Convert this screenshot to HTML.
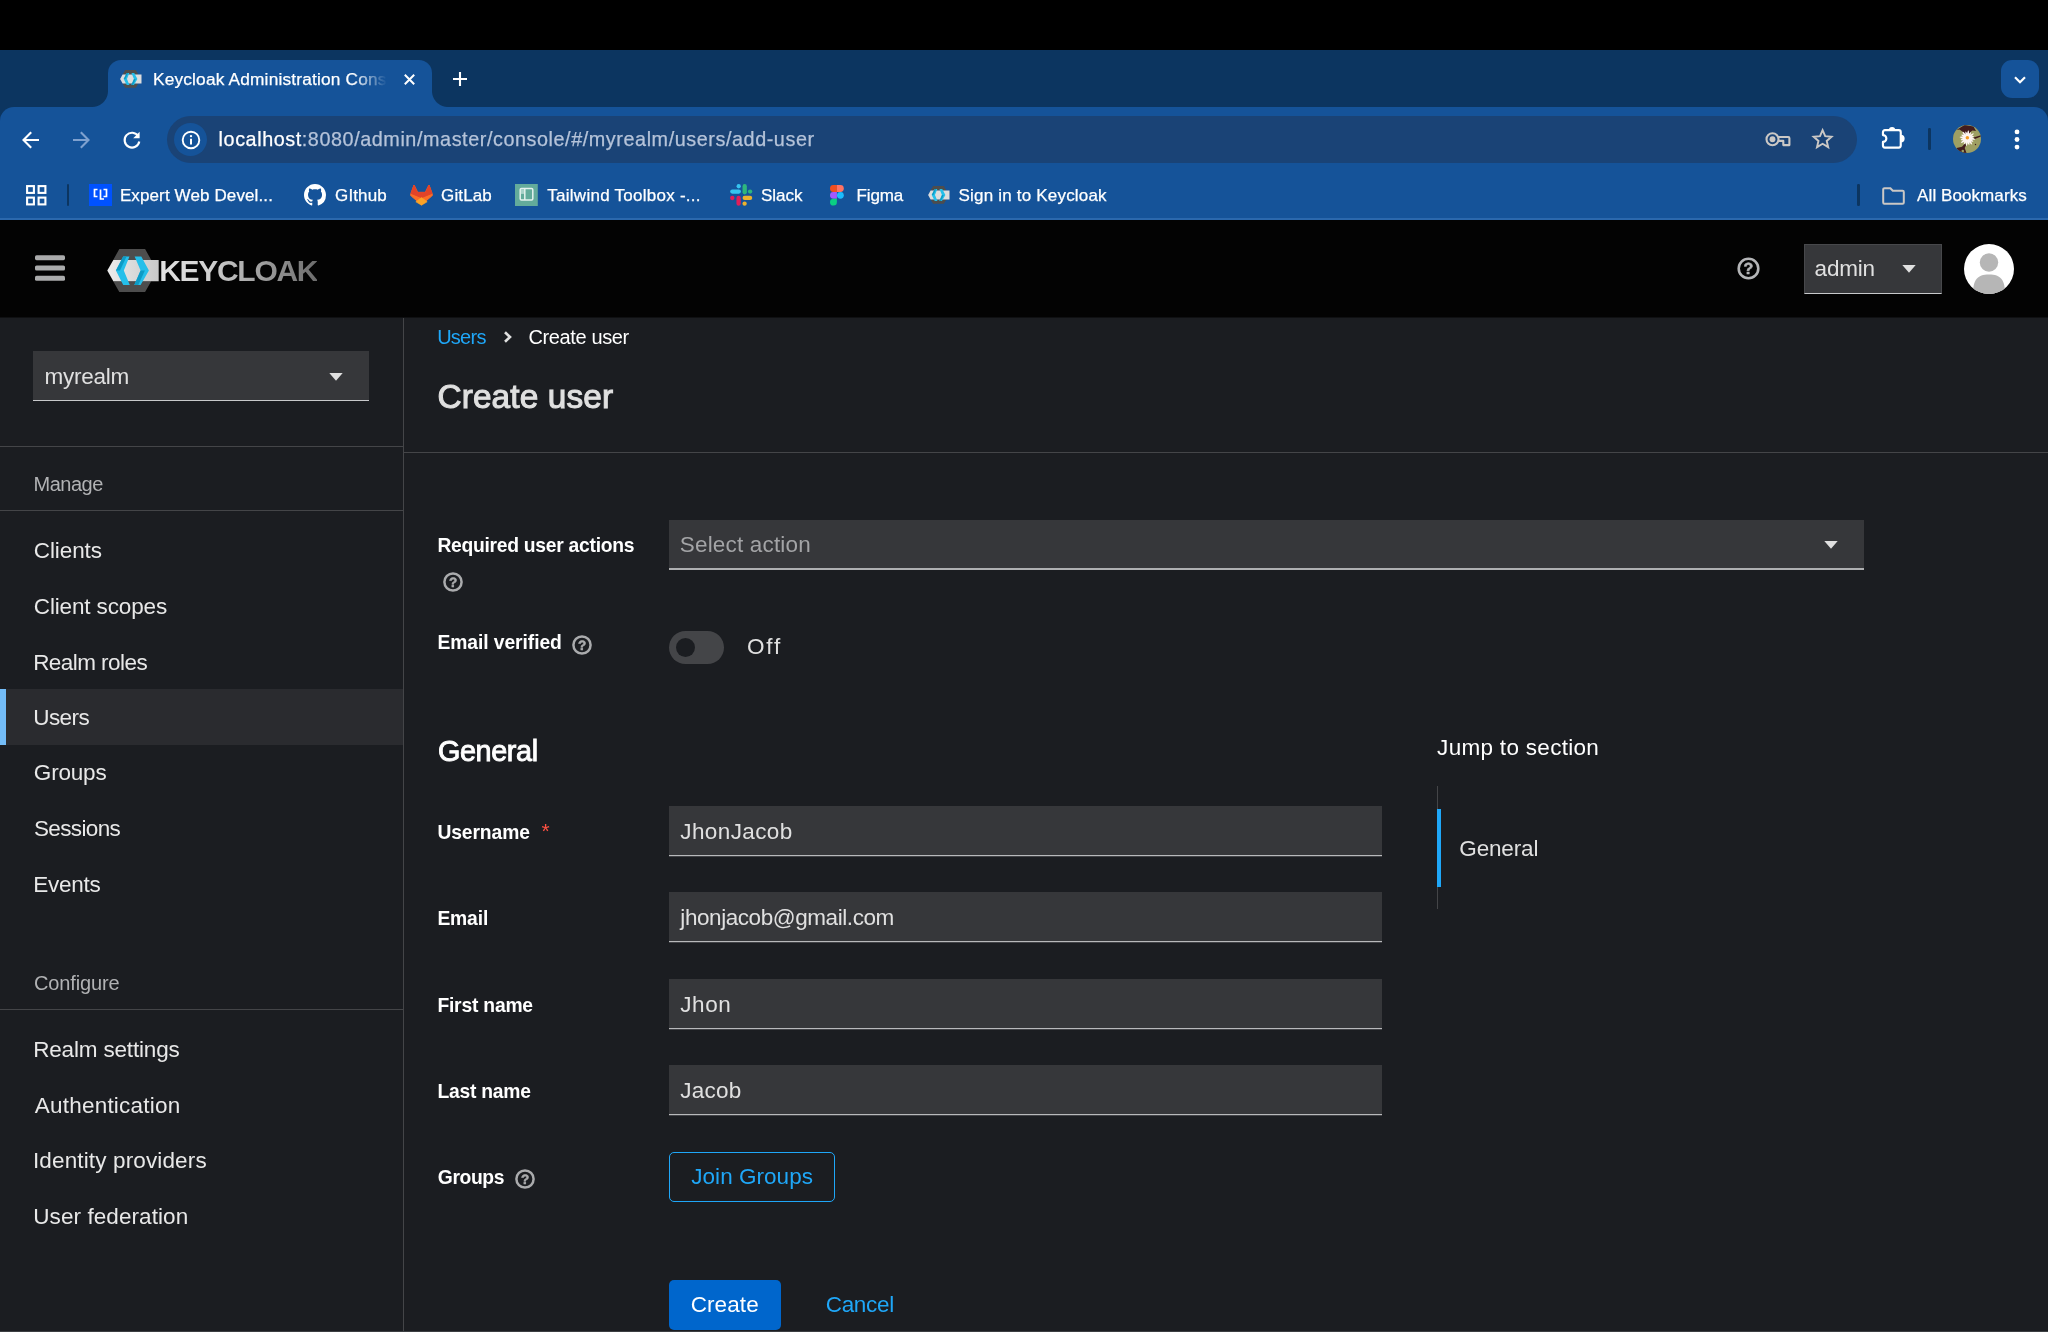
<!DOCTYPE html>
<html lang="en">
<head>
<meta charset="utf-8">
<title>Keycloak Administration Console</title>
<style>
*{box-sizing:border-box;margin:0;padding:0}
html,body{width:2048px;height:1332px;overflow:hidden;background:#000}
body{position:relative;font-family:"Liberation Sans",sans-serif;color:#fff}
.a{position:absolute}
.t{position:absolute;white-space:nowrap;line-height:1;color:#fff}
svg{position:absolute;overflow:visible}
svg text{text-rendering:geometricPrecision}
svg.hq{will-change:transform}
#tw{position:absolute;left:0;top:0;width:2048px;height:1332px;will-change:transform}
/* chrome */
#strip{left:0;top:50px;width:2048px;height:90px;background:#0c3560}
#tab{left:108px;top:60px;width:324px;height:47px;background:#155399;border-radius:13px 13px 0 0}
#tabl{left:92px;top:91px;width:16px;height:16px;background:radial-gradient(circle at 0 0,transparent 15.5px,#155399 16.5px)}
#tabr{left:432px;top:91px;width:16px;height:16px;background:radial-gradient(circle at 100% 0,transparent 15.5px,#155399 16.5px)}
#tool{left:0;top:107px;width:2048px;height:112px;background:#155399;border-radius:14px 14px 0 0}
#toolline{left:0;top:218px;width:2048px;height:2px;background:#2b68ad}
#omni{left:167px;top:116px;width:1690px;height:47px;border-radius:24px;background:#1a4376}
#info{left:174px;top:123px;width:33px;height:33px;border-radius:50%;background:#155399}
#tabsbtn{left:2001px;top:60px;width:38px;height:38px;border-radius:11px;background:#155399}
.cf{font-size:17px;color:#fff}
/* keycloak */
#hdr{left:0;top:220px;width:2048px;height:98px;background:linear-gradient(#030303 97px,#0f1012 97px)}
#page{left:0;top:318px;width:2048px;height:1014px;background:#1b1d21}
.ln{position:absolute;background:#444548}
.nav{font-size:22.5px;color:#f0f0f0;left:33px}
.lbl{font-size:18.5px;font-weight:bold;color:#fff;left:437px}
.inp{position:absolute;left:669px;width:713px;height:50px;background:#36373a;border-bottom:1px solid #b8b9bb;box-shadow:0 1px 0 rgba(184,185,187,.25)}
.val{font-size:22.5px;color:#e0e0e0;left:680px}
</style>
</head>
<body>
<!-- ===== browser chrome ===== -->
<div class="a" id="strip"></div>
<div class="a" id="tab"></div><div class="a" id="tabl"></div><div class="a" id="tabr"></div>
<div class="a" id="tabsbtn"></div>
<div class="a" id="tool"></div>
<div class="a" id="toolline"></div>
<div class="a" id="omni"></div>
<div class="a" id="info"></div>
<!-- chrome icons -->
<!-- tab favicon (keycloak) -->
<svg style="left:120.200px;top:70.200px" width="21.600" height="17.900" viewBox="0 0 52 43">
<path d="M12.300 0h25.800l6.100 11h-38zM6.200 32.300h38l-6.100 10.700h-25.800z" fill="#4d4d4d"/>
<path d="M0.300 21.600l6-10.600h45.400v21.300h-45.400z" fill="#dddddd"/>
<path d="M16.200 7.400h6.300l-5.700 14.200 6 14.400h-6.600l-7.300-14.400z" fill="#25bfea"/>
<path d="M16.200 7.400h3.400l-6.600 14.200h-4.100z" fill="#0e9bc5"/>
<path d="M34.300 7.400h-6.700l6 14.200-6.300 14.400h6.300l8.300-14.400z" fill="#25bfea"/>
<path d="M33.600 21.600h4.300l-6.600 14.400h-4z" fill="#0e9bc5"/>
</svg>
<!-- tab close -->
<svg style="left:404px;top:74px" width="11" height="11" viewBox="0 0 11 11"><path d="M0.800 0.800l9.400 9.400M10.200 0.800l-9.400 9.400" stroke="#fff" stroke-width="2" fill="none"/></svg>
<!-- new tab plus -->
<svg style="left:453px;top:71.500px" width="14" height="14" viewBox="0 0 14 14"><path d="M7 0v14M0 7h14" stroke="#fff" stroke-width="2.100" fill="none"/></svg>
<!-- tab search chevron -->
<svg style="left:2013.500px;top:75.500px" width="12" height="8" viewBox="0 0 12 8"><path d="M1 1.200l5 5 5-5" stroke="#fff" stroke-width="2.200" fill="none"/></svg>
<!-- back -->
<svg style="left:22px;top:130.500px" width="18" height="18" viewBox="0 0 18 18"><path d="M17 9h-15.500M9.200 1.300l-7.700 7.700 7.700 7.700" stroke="#fff" stroke-width="2.100" fill="none"/></svg>
<!-- forward -->
<svg style="left:72px;top:130.500px" width="18" height="18" viewBox="0 0 18 18"><path d="M1 9h15.500M8.800 1.300l7.700 7.700-7.700 7.700" stroke="#7fa1cf" stroke-width="2.100" fill="none"/></svg>
<!-- reload -->
<svg style="left:121.500px;top:129.500px" width="20" height="20" viewBox="0 0 20 20"><path d="M16.300 6.200a7.400 7.400 0 1 0 1 5.300" stroke="#fff" stroke-width="2.100" fill="none"/><path d="M17.600 1.800v6.400h-6.400z" fill="#fff"/></svg>
<!-- site info -->
<svg style="left:180.500px;top:129.500px" width="20" height="20" viewBox="0 0 20 20"><circle cx="10" cy="10" r="8.300" stroke="#fff" stroke-width="1.900" fill="none"/><path d="M10 8.800v5.600" stroke="#fff" stroke-width="2"/><circle cx="10" cy="6.100" r="1.200" fill="#fff"/></svg>
<!-- key -->
<svg style="left:1764.500px;top:132px" width="26" height="15" viewBox="0 0 26 15"><circle cx="7.500" cy="7.200" r="6" stroke="#cbc8c5" stroke-width="2.100" fill="none"/><circle cx="7.500" cy="7.250" r="2.950" fill="#cbc8c5"/><path d="M12.900 5h10.300a1.200 1.200 0 0 1 1.200 1.200v6.900h-6.100v-4.200h-5.100" stroke="#cbc8c5" stroke-width="2.100" fill="none" stroke-linejoin="round"/></svg>
<!-- star -->
<svg style="left:1811.700px;top:127.600px" width="21.200" height="21.200" viewBox="0 0 22 22"><path d="M11 2.300l2.700 6.100 6.600.6-5 4.400 1.500 6.500-5.800-3.500-5.800 3.500 1.500-6.500-5-4.400 6.600-.6z" stroke="#cbc8c5" stroke-width="2" fill="none" stroke-linejoin="miter"/></svg>
<!-- extensions -->
<svg style="left:1881px;top:125.800px" width="25" height="24" viewBox="0 0 25 24"><path d="M1.950 9.100v-2.950a2 2 0 0 1 2-2h13.800a2 2 0 0 1 2 2v13.400a2 2 0 0 1-2 2h-13.800a2 2 0 0 1-2-2v-3.650a3.400 3.400 0 0 0 0-6.800z" stroke="#fff" stroke-width="2.150" fill="none" stroke-linejoin="round"/><path d="M7.900 4.150a3.150 3.150 0 0 1 6.300 0zM19.750 8.700a3.900 3.900 0 0 1 0 7.800z" fill="#fff"/></svg>
<div class="a" style="left:1928.300px;top:128px;width:2.500px;height:21.500px;border-radius:1.200px;background:#0c3560"></div>
<!-- profile avatar -->
<svg style="left:1953px;top:125.100px" width="28" height="28" viewBox="0 0 28 28"><defs><clipPath id="pav"><circle cx="14" cy="14" r="14"/></clipPath></defs><g clip-path="url(#pav)"><rect width="28" height="28" fill="#9e9f63"/><path d="M11.500 0l9 1.500 2.500 4.500-3.500-.5-2 1.500-1 3.500h-4.500l-2-3.500-3.500-2.500-3 .5z" fill="#421c1d"/><path d="M3.500 23l5.500-1.200 3-3.300 1.500 1-1.800 3.500 1.800 5h-8z" fill="#421c1d"/><path d="M20.500 12.500l7.500-2.300v1.300l-6.800 2.700z" fill="#421c1d"/><circle cx="22.500" cy="19.500" r=".7" fill="#421c1d"/><circle cx="9.800" cy="26" r="1.300" fill="#9e9f63"/><g fill="#fdf4f1"><ellipse cx="14.400" cy="13.200" rx="7.9" ry="1.250" transform="rotate(8.0 14.400 13.200)"/><ellipse cx="14.400" cy="13.200" rx="6.9" ry="1.250" transform="rotate(30.5 14.400 13.200)"/><ellipse cx="14.400" cy="13.200" rx="7.9" ry="1.250" transform="rotate(53.0 14.400 13.200)"/><ellipse cx="14.400" cy="13.200" rx="6.9" ry="1.250" transform="rotate(75.5 14.400 13.200)"/><ellipse cx="14.400" cy="13.200" rx="7.9" ry="1.250" transform="rotate(98.0 14.400 13.200)"/><ellipse cx="14.400" cy="13.200" rx="6.9" ry="1.250" transform="rotate(120.5 14.400 13.200)"/><ellipse cx="14.400" cy="13.200" rx="7.9" ry="1.250" transform="rotate(143.0 14.400 13.200)"/><ellipse cx="14.400" cy="13.200" rx="6.9" ry="1.250" transform="rotate(165.5 14.400 13.200)"/><circle cx="14.400" cy="13.200" r="4.300"/></g><circle cx="14.350" cy="12.700" r="1.750" fill="#f59a23"/></g></svg>
<!-- menu dots -->
<svg style="left:2014px;top:129px" width="6" height="21" viewBox="0 0 6 21"><circle cx="3" cy="2.900" r="2.400" fill="#fff"/><circle cx="3" cy="10.500" r="2.400" fill="#fff"/><circle cx="3" cy="18.100" r="2.400" fill="#fff"/></svg>
<!-- bookmarks bar: apps -->
<svg style="left:26px;top:185px" width="21" height="21" viewBox="0 0 21 21"><g stroke="#fff" stroke-width="2.100" fill="none"><rect x="1.100" y="1.100" width="6.800" height="6.800"/><rect x="12.600" y="1.100" width="6.800" height="6.800"/><rect x="1.100" y="12.600" width="6.800" height="6.800"/><rect x="12.600" y="12.600" width="6.800" height="6.800"/></g></svg>
<div class="a" style="left:66.800px;top:184px;width:2.500px;height:22px;border-radius:1.200px;background:#0c3560"></div>
<!-- expert web dev favicon -->
<svg style="left:89px;top:184px" width="23" height="22" viewBox="0 0 23 22"><rect width="23" height="22" fill="#0052ff"/><path d="M8.500 5.500h-3v7h3M11.500 5.500v9.500h3.500M14.500 5.500h3v7h-3" stroke="#fff" stroke-width="1.700" fill="none"/></svg>
<!-- github -->
<svg style="left:304px;top:184px" width="22" height="22" viewBox="0 0 16 16"><path fill="#fff" d="M8 0C3.580 0 0 3.580 0 8c0 3.540 2.290 6.530 5.470 7.590.4.070.55-.17.550-.38 0-.19-.01-.82-.01-1.490-2.010.37-2.530-.49-2.690-.94-.09-.23-.48-.94-.82-1.130-.28-.15-.68-.52-.01-.53.630-.01 1.080.58 1.230.82.720 1.210 1.870.87 2.330.66.070-.52.280-.87.510-1.070-1.780-.2-3.640-.89-3.640-3.950 0-.87.310-1.590.82-2.150-.08-.2-.36-1.020.08-2.120 0 0 .67-.21 2.200.82.640-.18 1.320-.27 2-.27s1.360.09 2 .27c1.530-1.040 2.200-.82 2.200-.82.440 1.100.16 1.920.08 2.120.51.560.82 1.270.82 2.150 0 3.070-1.870 3.750-3.650 3.950.29.250.54.730.54 1.480 0 1.070-.01 1.930-.01 2.200 0 .21.150.46.550.38A8.013 8.013 0 0 0 16 8c0-4.420-3.580-8-8-8z"/></svg>
<!-- gitlab -->
<svg style="left:409.500px;top:184.200px" width="23" height="22" viewBox="0 0 23 22"><g stroke-linejoin="round" stroke-width="1"><path d="M4 1l3.600 7.400h7.800l3.600-7.400 3.300 9.300a1.500 1.500 0 0 1-.5 1.700l-10.300 8.700-10.300-8.700a1.500 1.500 0 0 1-.5-1.700z" fill="#fc6d26" stroke="#fc6d26"/><path d="M4 1l3.600 7.400h7.800l3.600-7.400 3 8.400-10.500 4.200-10.500-4.200z" fill="#e24329" stroke="#e24329"/><path d="M11.500 13.600l5.700 4.200-5.700 3.400-5.700-3.400z" fill="#fca326" stroke="#fca326" stroke-width=".6"/></g></svg>
<!-- tailwind toolbox -->
<svg style="left:515.200px;top:184px" width="22.800" height="22" viewBox="0 0 22.800 22"><rect width="22.800" height="22" fill="#63ab9b"/><rect x="5.200" y="4.600" width="12.600" height="11.400" rx="1.200" stroke="#e4f2ee" stroke-width="1.500" fill="none"/><path d="M9.800 4.600v11.400" stroke="#e4f2ee" stroke-width="1.500"/><rect x="6" y="5.400" width="3" height="4.500" fill="#e4f2ee" opacity=".55"/></svg>
<!-- slack -->
<svg style="left:730px;top:184px" width="22.300" height="22" viewBox="0 0 22.300 22"><g stroke-width="4.300" stroke-linecap="round" fill="none"><path d="M2.300 7.600h6.500" stroke="#36c5f0"/><path d="M8.700 2.250v0.100" stroke="#36c5f0"/><path d="M14.700 2.250v6" stroke="#2eb67d"/><path d="M20.050 7.600h0.100" stroke="#2eb67d"/><path d="M14.700 13.900h5.400" stroke="#ecb22e"/><path d="M14.600 19.600v0.100" stroke="#ecb22e"/><path d="M8.600 13.900v5.800" stroke="#e01e5a"/><path d="M2.250 14h0.100" stroke="#e01e5a"/></g></svg>
<!-- figma -->
<svg style="left:830.200px;top:185.100px" width="13.800" height="20.400" viewBox="0 0 15 22"><path d="M3.700 0h3.800v7.400h-3.800a3.700 3.700 0 0 1 0-7.400z" fill="#f24e1e"/><path d="M7.500 0h3.800a3.700 3.700 0 0 1 0 7.400h-3.800z" fill="#ff7262"/><path d="M3.700 7.400h3.800v7.400h-3.800a3.700 3.700 0 0 1 0-7.400z" fill="#a259ff"/><circle cx="11.300" cy="11.100" r="3.700" fill="#1abcfe"/><path d="M3.700 14.800h3.800v3.600a3.750 3.750 0 1 1-3.800-3.600z" fill="#0acf83"/></svg>
<!-- keycloak bookmark -->
<svg style="left:928.300px;top:186px" width="21.600" height="17.900" viewBox="0 0 52 43">
<path d="M12.300 0h25.800l6.100 11h-38zM6.200 32.300h38l-6.100 10.700h-25.800z" fill="#4d4d4d"/>
<path d="M0.300 21.600l6-10.600h45.400v21.300h-45.400z" fill="#dddddd"/>
<path d="M16.200 7.400h6.300l-5.700 14.200 6 14.400h-6.600l-7.300-14.400z" fill="#25bfea"/>
<path d="M16.200 7.400h3.400l-6.600 14.200h-4.100z" fill="#0e9bc5"/>
<path d="M34.300 7.400h-6.700l6 14.200-6.300 14.400h6.300l8.300-14.400z" fill="#25bfea"/>
<path d="M33.600 21.600h4.300l-6.600 14.400h-4z" fill="#0e9bc5"/>
</svg>
<div class="a" style="left:1857.300px;top:184px;width:2.500px;height:21.500px;border-radius:1.200px;background:#0c3560"></div>
<!-- folder -->
<svg style="left:1882px;top:186.500px" width="23" height="18" viewBox="0 0 23 18"><path d="M1.200 2.400a1.200 1.200 0 0 1 1.200-1.200h6l2.400 2.600h9.800a1.200 1.200 0 0 1 1.200 1.200v10.600a1.200 1.200 0 0 1-1.200 1.200h-18.200a1.200 1.200 0 0 1-1.200-1.200z" stroke="#cbc8c5" stroke-width="2" fill="none"/></svg>

<!-- ===== keycloak ===== -->
<div class="a" id="hdr"></div>
<div class="a" id="page"></div>
<!-- kc header -->
<svg style="left:35px;top:255px" width="30" height="26" viewBox="0 0 30 26"><g fill="#aaabac"><rect x="0" y="0.2" width="30" height="5" rx="1.6"/><rect x="0" y="10.5" width="30" height="5" rx="1.6"/><rect x="0" y="20.8" width="30" height="5" rx="1.6"/></g></svg>
<svg style="left:107px;top:249px" width="52" height="43" viewBox="0 0 52 43">
<defs><linearGradient id="kcb" x1="0" x2="1" y1="0" y2="0"><stop offset="0" stop-color="#ececec"/><stop offset="1" stop-color="#c9c9c9"/></linearGradient></defs>
<path d="M12.300 0h25.800l6.100 11h-38zM6.200 32.300h38l-6.100 10.700h-25.800z" fill="#4d4d4d"/>
<path d="M0.300 21.600l6-10.600h45.400v21.300h-45.400z" fill="url(#kcb)"/>
<path d="M16.200 7.400h6.300l-5.700 14.200 6 14.400h-6.600l-7.300-14.400z" fill="#25bfea"/>
<path d="M16.200 7.400h3.400l-6.600 14.200h-4.100z" fill="#0e9bc5"/>
<path d="M34.300 7.400h-6.700l6 14.200-6.300 14.400h6.300l8.300-14.400z" fill="#25bfea"/>
<path d="M33.600 21.600h4.300l-6.600 14.400h-4z" fill="#0e9bc5"/>
</svg>
<svg class="hq" style="left:1736.5px;top:256.500px" width="23" height="23" viewBox="0 0 23 23"><circle cx="11.500" cy="11.500" r="9.800" fill="none" stroke="#b4b5b7" stroke-width="2.600"/><text x="11.500" y="16.700" text-anchor="middle" font-family="Liberation Sans,sans-serif" font-weight="bold" font-size="16" fill="#b4b5b7" stroke="#b4b5b7" stroke-width=".5">?</text></svg>
<div class="a" style="left:1803.5px;top:244px;width:138.500px;height:50px;background:#36373a;border:1px solid #47484b;border-bottom:1px solid #c8c9cb"></div>
<svg style="left:1901.500px;top:265.300px" width="14" height="8" viewBox="0 0 14 8"><path d="M0.300 0h13.400l-6.700 7.800z" fill="#e0e0e0"/></svg>
<svg style="left:1964.400px;top:243.800px" width="50" height="50" viewBox="0 0 50 50"><defs><clipPath id="avc"><circle cx="25" cy="25" r="25"/></clipPath></defs><circle cx="25" cy="25" r="25" fill="#fff"/><g clip-path="url(#avc)"><circle cx="25" cy="18.500" r="9.200" fill="#b6b6b6"/><path d="M9 50c0-14 4-19.500 16-19.500s16 5.500 16 19.500z" fill="#b6b6b6"/></g></svg>

<!-- sidebar -->
<div class="ln" style="left:403px;top:318px;width:1px;height:1014px"></div>
<div class="a" style="left:33px;top:351px;width:336px;height:50px;background:#36373a;border-bottom:1px solid #c8c9cb"></div>
<svg style="left:329px;top:373px" width="14" height="8" viewBox="0 0 14 8"><path d="M0.3 0h13.4l-6.7 7.8z" fill="#e0e0e0"/></svg>
<div class="ln" style="left:0;top:446px;width:403px;height:1px"></div>
<div class="ln" style="left:0;top:510px;width:403px;height:1px"></div>
<div class="a" style="left:0;top:689px;width:403px;height:56px;background:#2a2b2f"></div>
<div class="a" style="left:0;top:689px;width:6px;height:56px;background:#73bcf7"></div>
<div class="ln" style="left:0;top:1009px;width:403px;height:1px"></div>
<div class="a" style="left:0;top:1331px;width:2048px;height:1px;background:#3c3f42"></div>

<!-- main -->
<svg style="left:503px;top:331px" width="10" height="12" viewBox="0 0 10 12"><path d="M2 1.2l5 4.8-5 4.8" fill="none" stroke="#e0e0e0" stroke-width="2.6"/></svg>
<div class="ln" style="left:404px;top:452px;width:1644px;height:1px"></div>
<div class="a" style="left:669px;top:520px;width:1195px;height:50px;background:#36373a;border-bottom:2px solid #aeafb1"></div>
<svg style="left:1823.5px;top:541px" width="14" height="8" viewBox="0 0 14 8"><path d="M0.3 0h13.4l-6.7 7.8z" fill="#e0e0e0"/></svg>
<svg class="hq" style="left:442.5px;top:571.5px" width="20" height="20" viewBox="0 0 20 20"><circle cx="10" cy="10" r="8.600" fill="none" stroke="#aaabad" stroke-width="2.500"/><text x="10" y="14.700" text-anchor="middle" font-family="Liberation Sans,sans-serif" font-weight="bold" font-size="13.500" fill="#aaabad" stroke="#aaabad" stroke-width=".5">?</text></svg>
<svg class="hq" style="left:572px;top:635px" width="20" height="20" viewBox="0 0 20 20"><circle cx="10" cy="10" r="8.600" fill="none" stroke="#aaabad" stroke-width="2.500"/><text x="10" y="14.700" text-anchor="middle" font-family="Liberation Sans,sans-serif" font-weight="bold" font-size="13.500" fill="#aaabad" stroke="#aaabad" stroke-width=".5">?</text></svg>
<svg class="hq" style="left:515px;top:1169.3px" width="20" height="20" viewBox="0 0 20 20"><circle cx="10" cy="10" r="8.600" fill="none" stroke="#aaabad" stroke-width="2.500"/><text x="10" y="14.700" text-anchor="middle" font-family="Liberation Sans,sans-serif" font-weight="bold" font-size="13.500" fill="#aaabad" stroke="#aaabad" stroke-width=".5">?</text></svg>
<div class="a" style="left:669px;top:630.5px;width:55px;height:33px;border-radius:17px;background:#444548"></div>
<div class="a" style="left:676px;top:637.5px;width:19px;height:19px;border-radius:50%;background:#1b1d21"></div>
<div class="inp" style="top:806px"></div>
<div class="inp" style="top:892px"></div>
<div class="inp" style="top:979px"></div>
<div class="inp" style="top:1065px"></div>
<div class="ln" style="left:1437px;top:786px;width:1px;height:123px"></div>
<div class="a" style="left:1437px;top:809px;width:4.3px;height:78px;background:#1fa7f8"></div>
<div class="a" style="left:669px;top:1151.5px;width:166px;height:50px;border:1.5px solid #1fa7f8;border-radius:5px"></div>
<div class="a" style="left:669px;top:1280px;width:112px;height:50px;background:#0066cc;border-radius:5px"></div>

<!-- text -->
<div id="tw">
<div class="t" style="left:152.96px;top:71px;font-size:17.3px;letter-spacing:0.18px;color:#fff;width:236px;overflow:hidden;-webkit-mask-image:linear-gradient(90deg,#000 200px,transparent 234px);mask-image:linear-gradient(90deg,#000 200px,transparent 234px);-webkit-text-stroke:0.25px">Keycloak Administration Console</div>
<div class="t" style="left:218.60px;top:130px;font-size:19.8px;letter-spacing:0.57px;color:#b5c3d9;-webkit-text-stroke:0.25px"><span style="color:#fff">localhost</span>:8080/admin/master/console/#/myrealm/users/add-user</div>
<div class="t" style="left:119.89px;top:187px;font-size:17px;letter-spacing:0.12px;;-webkit-text-stroke:0.25px">Expert Web Devel...</div>
<div class="t" style="left:335.11px;top:187px;font-size:17px;letter-spacing:0.10px;;-webkit-text-stroke:0.25px">GIthub</div>
<div class="t" style="left:441.11px;top:187px;font-size:17px;letter-spacing:0.10px;;-webkit-text-stroke:0.25px">GitLab</div>
<div class="t" style="left:547.30px;top:187px;font-size:17px;letter-spacing:0.26px;;-webkit-text-stroke:0.25px">Tailwind Toolbox -...</div>
<div class="t" style="left:760.93px;top:187px;font-size:17px;letter-spacing:0.01px;;-webkit-text-stroke:0.25px">Slack</div>
<div class="t" style="left:856.52px;top:187px;font-size:17px;letter-spacing:-0.11px;;-webkit-text-stroke:0.25px">Figma</div>
<div class="t" style="left:958.58px;top:187px;font-size:17px;letter-spacing:0.19px;;-webkit-text-stroke:0.25px">Sign in to Keycloak</div>
<div class="t" style="left:1917.12px;top:187px;font-size:17px;letter-spacing:0.08px;;-webkit-text-stroke:0.25px">All Bookmarks</div>
<div class="t" style="left:159.22px;top:256px;font-size:30px;letter-spacing:-1.30px;font-weight:bold;background:linear-gradient(90deg,#e2e2e2 0%,#d2d2d2 30%,#9a9a9a 68%,#6c6c6c 100%);-webkit-background-clip:text;background-clip:text;color:transparent;-webkit-text-fill-color:transparent">KEYCLOAK</div>
<div class="t" style="left:1814.61px;top:258px;font-size:22.5px;letter-spacing:-0.21px;color:#e0e0e0">admin</div>
<div class="t" style="left:44.47px;top:366px;font-size:22.5px;letter-spacing:-0.23px;color:#e0e0e0">myrealm</div>
<div class="t" style="left:33.49px;top:474px;font-size:20px;letter-spacing:-0.48px;color:#b1b2b4">Manage</div>
<div class="t" style="left:33.80px;top:540px;font-size:22.5px;letter-spacing:-0.09px;color:#e8e8e8">Clients</div>
<div class="t" style="left:33.80px;top:596px;font-size:22.5px;letter-spacing:-0.14px;color:#e8e8e8">Client scopes</div>
<div class="t" style="left:33.15px;top:652px;font-size:22.5px;letter-spacing:-0.55px;color:#e8e8e8">Realm roles</div>
<div class="t" style="left:33.25px;top:707px;font-size:22.5px;letter-spacing:-0.58px;color:#e8e8e8">Users</div>
<div class="t" style="left:33.85px;top:762px;font-size:22.5px;letter-spacing:-0.20px;color:#e8e8e8">Groups</div>
<div class="t" style="left:33.97px;top:818px;font-size:22.5px;letter-spacing:-0.64px;color:#e8e8e8">Sessions</div>
<div class="t" style="left:33.15px;top:874px;font-size:22.5px;letter-spacing:-0.25px;color:#e8e8e8">Events</div>
<div class="t" style="left:33.97px;top:973px;font-size:20px;letter-spacing:-0.14px;color:#b1b2b4">Configure</div>
<div class="t" style="left:33.15px;top:1039px;font-size:22.5px;letter-spacing:-0.17px;color:#e8e8e8">Realm settings</div>
<div class="t" style="left:34.75px;top:1095px;font-size:22.5px;letter-spacing:0.22px;color:#e8e8e8">Authentication</div>
<div class="t" style="left:32.95px;top:1150px;font-size:22.5px;letter-spacing:0.14px;color:#e8e8e8">Identity providers</div>
<div class="t" style="left:33.25px;top:1206px;font-size:22.5px;letter-spacing:0.08px;color:#e8e8e8">User federation</div>
<div class="t" style="left:437.13px;top:327px;font-size:20px;letter-spacing:-0.74px;color:#1fa7f8">Users</div>
<div class="t" style="left:528.50px;top:327px;font-size:20px;letter-spacing:-0.38px;color:#fff">Create user</div>
<div class="t" style="left:437.40px;top:380px;font-size:33.4px;letter-spacing:0.13px;color:#e0e0e0;-webkit-text-stroke:1.05px #e0e0e0">Create user</div>
<div class="t" style="left:437.39px;top:536px;font-size:19.3px;letter-spacing:-0.27px;font-weight:bold;color:#fff">Required user actions</div>
<div class="t" style="left:679.75px;top:534px;font-size:22.5px;letter-spacing:0.18px;color:#a3a4a6">Select action</div>
<div class="t" style="left:437.39px;top:633px;font-size:19.3px;letter-spacing:-0.07px;font-weight:bold;color:#fff">Email verified</div>
<div class="t" style="left:747.12px;top:636px;font-size:22.5px;letter-spacing:1.73px;color:#e0e0e0">Off</div>
<div class="t" style="left:437.96px;top:737px;font-size:28.8px;letter-spacing:-0.39px;color:#fff;-webkit-text-stroke:0.9px #fff">General</div>
<div class="t" style="left:1437.10px;top:737px;font-size:22.5px;letter-spacing:0.30px;color:#fff">Jump to section</div>
<div class="t" style="left:1459.30px;top:838px;font-size:22.5px;letter-spacing:-0.16px;color:#e0e0e0">General</div>
<div class="t" style="left:437.43px;top:823px;font-size:19.3px;letter-spacing:-0.11px;font-weight:bold;color:#fff">Username</div>
<div class="t" style="left:541.43px;top:820px;font-size:21px;color:#fe5142">*</div>
<div class="t" style="left:680.25px;top:821px;font-size:22.5px;letter-spacing:0.40px;color:#e0e0e0">JhonJacob</div>
<div class="t" style="left:437.39px;top:909px;font-size:19.3px;letter-spacing:-0.14px;font-weight:bold;color:#fff">Email</div>
<div class="t" style="left:680.34px;top:907px;font-size:22.5px;letter-spacing:-0.43px;color:#e0e0e0">jhonjacob@gmail.com</div>
<div class="t" style="left:437.39px;top:996px;font-size:19.3px;letter-spacing:-0.20px;font-weight:bold;color:#fff">First name</div>
<div class="t" style="left:680.25px;top:994px;font-size:22.5px;letter-spacing:0.56px;color:#e0e0e0">Jhon</div>
<div class="t" style="left:437.39px;top:1082px;font-size:19.3px;letter-spacing:-0.22px;font-weight:bold;color:#fff">Last name</div>
<div class="t" style="left:680.25px;top:1080px;font-size:22.5px;letter-spacing:0.25px;color:#e0e0e0">Jacob</div>
<div class="t" style="left:437.82px;top:1168px;font-size:19.3px;letter-spacing:-0.40px;font-weight:bold;color:#fff">Groups</div>
<div class="t" style="left:691.25px;top:1166px;font-size:22.5px;letter-spacing:0.04px;color:#1fa7f8">Join Groups</div>
<div class="t" style="left:690.70px;top:1294px;font-size:22.5px;letter-spacing:0.09px;color:#fff">Create</div>
<div class="t" style="left:825.70px;top:1294px;font-size:22.5px;letter-spacing:-0.29px;color:#1fa7f8">Cancel</div>
</div>
</body>
</html>
